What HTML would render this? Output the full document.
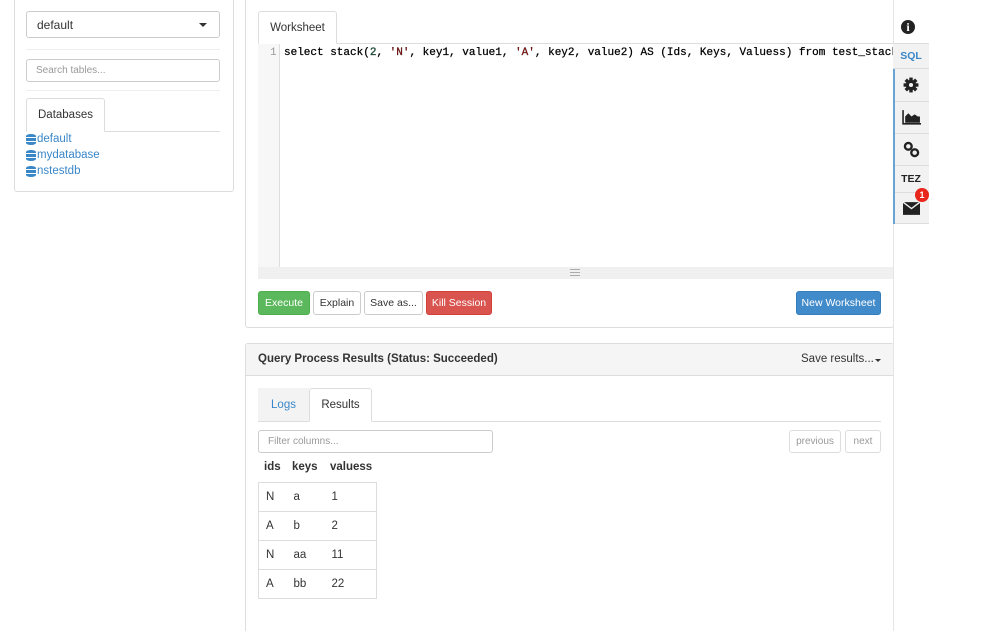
<!DOCTYPE html>
<html><head><style>
*{box-sizing:border-box;margin:0;padding:0}
html,body{width:999px;height:631px;overflow:hidden}
body{background:#fff;font-family:"Liberation Sans",sans-serif;font-size:11px;color:#333;position:relative}
.a{position:absolute}
.box{border:1px solid #ddd;border-radius:3px;background:#fff}
.inp{border:1px solid #ccc;border-radius:3px;background:#fff;color:#999;font-size:10px;padding-left:9px;display:flex;align-items:center}
.btn{position:absolute;top:291px;height:24px;border:1px solid #ccc;border-radius:3px;display:flex;align-items:center;justify-content:center;font-size:10.5px;background:#fff;color:#333}
.mono{font-family:"Liberation Mono",monospace;font-size:11px;color:#000}
.db{color:#3a87c8;font-size:11.5px;display:flex;align-items:center;height:16px}
.cyl{width:10px;height:11px;margin-right:1px;background:repeating-linear-gradient(#3a87c8 0 3px,#fff 3px 4px);border-radius:5px/2px}
.sb{position:absolute;left:893px;width:36px;background:#f2f2f2;border-bottom:1px solid #ddd;display:flex;align-items:center;justify-content:center}
td{border-top:1px solid #ddd;height:29px;padding-left:7px;font-size:11.5px}
</style></head><body>
<div class="a box" style="left:14px;top:-5px;width:220px;height:197px"></div>
<div class="a" style="left:26px;top:11px;width:194px;height:27px;border:1px solid #ccc;border-radius:3px;font-size:12px;color:#333;padding:0 0 0 10px;display:flex;align-items:center">default<span style="position:absolute;right:12px;top:11px;border-left:4px solid transparent;border-right:4px solid transparent;border-top:4px solid #333"></span></div>
<div class="a" style="left:26px;top:49px;width:194px;border-top:1px solid #eee"></div>
<div class="a inp" style="left:26px;top:59px;width:194px;height:23px">Search tables...</div>
<div class="a" style="left:26px;top:90px;width:194px;border-top:1px solid #eee"></div>
<div class="a" style="left:26px;top:131px;width:194px;border-top:1px solid #ddd"></div>
<div class="a" style="left:26px;top:98px;width:79px;height:34px;border:1px solid #ddd;border-bottom:1px solid #fff;border-radius:3px 3px 0 0;background:#fff;font-size:11.5px;display:flex;align-items:center;justify-content:center">Databases</div>
<div class="a" style="left:26px;top:131px">
<div class="db"><span class="cyl"></span>default</div>
<div class="db"><span class="cyl"></span>mydatabase</div>
<div class="db"><span class="cyl"></span>nstestdb</div>
</div>
<div class="a box" style="left:245px;top:-5px;width:649px;height:333px"></div>
<div class="a" style="left:258px;top:43px;width:635px;border-top:1px solid #ddd"></div>
<div class="a" style="left:258px;top:11px;width:79px;height:33px;border:1px solid #ddd;border-bottom:1px solid #fff;border-radius:3px 3px 0 0;background:#fff;font-size:11.5px;display:flex;align-items:center;justify-content:center">Worksheet</div>
<div class="a" style="left:258px;top:44px;width:22px;height:223px;background:#f7f7f7;border-right:1px solid #ddd"></div>
<div class="a mono" style="left:270px;top:47px;color:#999">1</div>
<div class="a mono" style="left:284px;top:47px;white-space:nowrap;width:609px;overflow:hidden;-webkit-text-stroke:0.25px #000">select stack(<span style="color:#164">2</span>, <span style="color:#a11">'N'</span>, key1, value1, <span style="color:#a11">'A'</span>, key2, value2) AS (Ids, Keys, Valuess) from test_stack</div>
<div class="a" style="left:258px;top:267px;width:635px;height:12px;background:#f0f0f0"></div>
<div class="a" style="left:570px;top:269px;width:10px;height:7px;border-top:1px solid #aaa;border-bottom:1px solid #aaa"></div>
<div class="a" style="left:570px;top:272px;width:10px;border-top:1px solid #aaa"></div>
<div class="btn" style="left:258px;width:52px;background:#5cb85c;border-color:#4cae4c;color:#fff">Execute</div>
<div class="btn" style="left:313px;width:48px">Explain</div>
<div class="btn" style="left:364px;width:59px">Save as...</div>
<div class="btn" style="left:426px;width:66px;background:#d9534f;border-color:#d43f3a;color:#fff">Kill Session</div>
<div class="btn" style="left:796px;width:85px;background:#428bca;border-color:#357ebd;color:#fff">New Worksheet</div>
<div class="a box" style="left:245px;top:343px;width:649px;height:288px;border-bottom:0;border-radius:3px 3px 0 0"></div>
<div class="a" style="left:246px;top:344px;width:647px;height:32px;background:#f5f5f5;border-bottom:1px solid #ddd;border-radius:3px 3px 0 0"></div>
<div class="a" style="left:258px;top:353px;font-size:11.5px;font-weight:bold">Query Process Results (Status: Succeeded)</div>
<div class="a" style="left:801px;top:353px;font-size:11.5px">Save results...</div>
<div class="a" style="left:875px;top:359px;border-left:3px solid transparent;border-right:3px solid transparent;border-top:3px solid #333"></div>
<div class="a" style="left:258px;top:421px;width:623px;border-top:1px solid #ddd"></div>
<div class="a" style="left:258px;top:388px;width:51px;height:33px;background:#f3f3f3;color:#3a87c8;font-size:11.5px;display:flex;align-items:center;justify-content:center">Logs</div>
<div class="a" style="left:309px;top:388px;width:63px;height:34px;border:1px solid #ddd;border-bottom:1px solid #fff;border-radius:3px 3px 0 0;background:#fff;font-size:11.5px;display:flex;align-items:center;justify-content:center">Results</div>
<div class="a inp" style="left:258px;top:430px;width:235px;height:23px">Filter columns...</div>
<div class="a inp" style="left:789px;top:430px;width:52px;height:23px;padding:0;justify-content:center;border-color:#ddd">previous</div>
<div class="a inp" style="left:845px;top:430px;width:36px;height:23px;padding:0;justify-content:center;border-color:#ddd">next</div>
<div class="a" style="left:264px;top:461px;font-weight:bold;font-size:11.5px">ids</div>
<div class="a" style="left:292px;top:461px;font-weight:bold;font-size:11.5px">keys</div>
<div class="a" style="left:330px;top:461px;font-weight:bold;font-size:11.5px">valuess</div>
<table class="a" style="left:258px;top:482px;width:119px;border:1px solid #ddd;border-collapse:collapse">
<tr><td style="border-top:0;width:28px">N</td><td style="border-top:0;width:38px">a</td><td style="border-top:0">1</td></tr>
<tr><td>A</td><td>b</td><td>2</td></tr>
<tr><td>N</td><td>aa</td><td>11</td></tr>
<tr><td>A</td><td>bb</td><td>22</td></tr>
</table>
<div class="a" style="left:893px;top:0;height:631px;border-left:1px solid #e5e5e5"></div>
<div class="a" style="left:901px;top:20px;width:14px;height:14px;border-radius:50%;background:#222;color:#fff;font-weight:bold;font-size:12px;font-family:'Liberation Serif',serif;display:flex;align-items:center;justify-content:center">i</div>
<div class="sb" style="top:43px;height:26px;border-top:1px solid #ddd;color:#3a87c8;font-size:10.5px;font-weight:bold">SQL</div>
<div class="a" style="left:893px;top:69px;height:155px;border-left:2px solid #6aa3d6;z-index:2"></div>
<div class="sb" style="top:69px;height:33px"><svg width="16" height="16" viewBox="0 0 14 14"><g fill="#222"><circle cx="7" cy="7" r="4.5"/><rect x="5.5" y="0.5" width="3" height="13"/><rect x="0.5" y="5.5" width="13" height="3"/><rect x="5.5" y="0.5" width="3" height="13" transform="rotate(45 7 7)"/><rect x="5.5" y="0.5" width="3" height="13" transform="rotate(-45 7 7)"/></g><circle cx="7" cy="7" r="1.8" fill="#f2f2f2"/></svg></div>
<div class="sb" style="top:102px;height:32px"><svg width="19" height="15" viewBox="0 0 18 14"><path d="M1 0V13H18" stroke="#222" stroke-width="1.5" fill="none"/><path d="M3 12V6L6 3L9 6L12 4L15 6L17 6V12Z" fill="#222"/></svg></div>
<div class="sb" style="top:134px;height:32px"><svg width="17" height="17" viewBox="0 0 16 16"><g fill="none" stroke="#222" stroke-width="2.2"><circle cx="5" cy="5" r="3.2"/><circle cx="11" cy="11" r="3.2"/></g></svg></div>
<div class="sb" style="top:166px;height:27px;font-size:10.5px;font-weight:bold;color:#222">TEZ</div>
<div class="sb" style="top:193px;height:31px"><svg width="17" height="13" viewBox="0 0 16 12"><path d="M0 0H16V12H0Z" fill="#222"/><path d="M0 0L8 6L16 0" stroke="#f2f2f2" stroke-width="1.3" fill="none"/></svg></div>
<div class="a" style="left:915px;top:188px;width:14px;height:14px;border-radius:50%;background:#e8261b;color:#fff;font-size:9px;font-weight:bold;display:flex;align-items:center;justify-content:center;z-index:3">1</div>
</body></html>
